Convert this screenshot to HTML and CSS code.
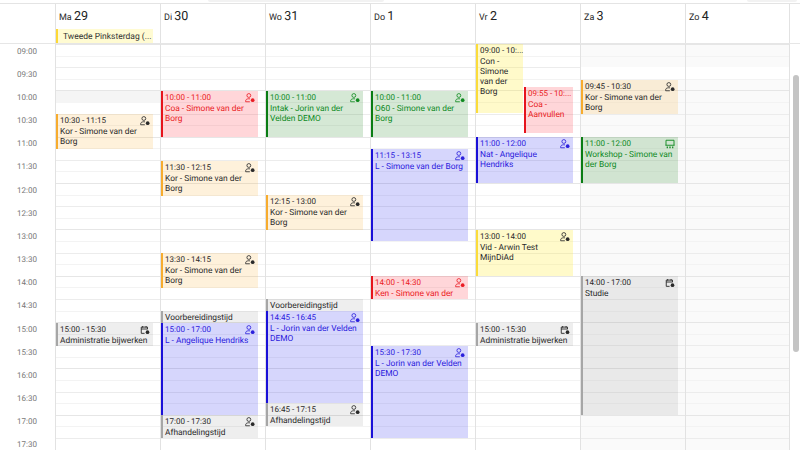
FILE: index.html
```html
<!DOCTYPE html>
<html>

<head>
    <meta charset="UTF-8">
    <link rel="stylesheet" href="styles.css">
</head>

<body>
    <svg class="icon-defs" width="0" height="0">
        <symbol id="person" viewBox="0 0 12 12">
            <circle cx="4.6" cy="3" r="2.3" fill="none" stroke="currentColor" stroke-width="1" />
            <path d="M.8 10.5V9.2c0-1.5 2-2.3 3.8-2.3.5 0 1 .1 1.5.2M.8 10.5h5" fill="none" stroke="currentColor" stroke-width="1" />
            <circle cx="9.2" cy="8.6" r="2.2" fill="currentColor" />
        </symbol>
        <symbol id="agenda" viewBox="0 0 12 12">
            <path d="M5.5 10H1.5V2.5h7.5V5M1.5 4.8h7.5M3.2 1.2v2M7.3 1.2v2" fill="none" stroke="currentColor" stroke-width="1.1" />
            <circle cx="9" cy="8.6" r="2.2" fill="currentColor" />
        </symbol>
        <symbol id="room" viewBox="0 0 12 12">
            <path d="M1.2 7.5V1.5h9.6v6" fill="none" stroke="currentColor" stroke-width="1.1" />
            <path d="M.5 7.5h11" fill="none" stroke="currentColor" stroke-width="1.1" />
            <path d="M2 9h1.5v2H2zM5.2 9h1.6v2H5.2zM8.5 9H10v2H8.5z" fill="currentColor" />
        </symbol>
    </svg>

    <div class="topbar">
        <span class="tab tab-left"></span>
        <span class="tab tab-right"></span>
    </div>

    <header class="week-head">
        <div class="corner"></div>
        <div class="day-head">
            <div class="day-title">Ma <strong>29</strong></div>
            <div class="all-day">Tweede Pinksterdag (...</div>
        </div>
        <div class="day-head">
            <div class="day-title">Di <strong>30</strong></div>
        </div>
        <div class="day-head">
            <div class="day-title">Wo <strong>31</strong></div>
        </div>
        <div class="day-head">
            <div class="day-title">Do <strong>1</strong></div>
        </div>
        <div class="day-head">
            <div class="day-title">Vr <strong>2</strong></div>
        </div>
        <div class="day-head">
            <div class="day-title">Za <strong>3</strong></div>
        </div>
        <div class="day-head">
            <div class="day-title">Zo <strong>4</strong></div>
        </div>
    </header>

    <div class="week-body">
        <div class="times">
            <div class="time">09:00</div>
            <div class="time">09:30</div>
            <div class="time">10:00</div>
            <div class="time">10:30</div>
            <div class="time">11:00</div>
            <div class="time">11:30</div>
            <div class="time">12:00</div>
            <div class="time">12:30</div>
            <div class="time">13:00</div>
            <div class="time">13:30</div>
            <div class="time">14:00</div>
            <div class="time">14:30</div>
            <div class="time">15:00</div>
            <div class="time">15:30</div>
            <div class="time">16:00</div>
            <div class="time">16:30</div>
            <div class="time">17:00</div>
            <div class="time">17:30</div>
        </div>

        <!-- maandag -->
        <div class="day">
            <div class="blocked" style="top: 47px; height: 12px"></div>
            <div class="event orange" style="top: 70px; height: 35px">
                <div class="event-time"><span>10:30 - 11:15</span><svg class="icon"><use href="#person" /></svg></div>
                <div>Kor - Simone van der Borg</div>
            </div>
            <div class="event grey" style="top: 279px; height: 23px">
                <div class="event-time"><span>15:00 - 15:30</span><svg class="icon"><use href="#agenda" /></svg></div>
                <div>Administratie bijwerken</div>
            </div>
        </div>

        <!-- dinsdag -->
        <div class="day">
            <div class="event red" style="top: 47px; height: 46px">
                <div class="event-time"><span>10:00 - 11:00</span><svg class="icon"><use href="#person" /></svg></div>
                <div>Coa - Simone van der Borg</div>
            </div>
            <div class="event orange" style="top: 117px; height: 35px">
                <div class="event-time"><span>11:30 - 12:15</span><svg class="icon"><use href="#person" /></svg></div>
                <div>Kor - Simone van der Borg</div>
            </div>
            <div class="event orange" style="top: 209px; height: 35px">
                <div class="event-time"><span>13:30 - 14:15</span><svg class="icon"><use href="#person" /></svg></div>
                <div>Kor - Simone van der Borg</div>
            </div>
            <div class="event grey" style="top: 267px; height: 12px">
                <div>Voorbereidingstijd</div>
            </div>
            <div class="event blue" style="top: 279px; height: 92px">
                <div class="event-time"><span>15:00 - 17:00</span><svg class="icon"><use href="#person" /></svg></div>
                <div>L - Angelique Hendriks</div>
            </div>
            <div class="event grey" style="top: 371px; height: 23px">
                <div class="event-time"><span>17:00 - 17:30</span><svg class="icon"><use href="#person" /></svg></div>
                <div>Afhandelingstijd</div>
            </div>
        </div>

        <!-- woensdag -->
        <div class="day">
            <div class="event green" style="top: 47px; height: 46px">
                <div class="event-time"><span>10:00 - 11:00</span><svg class="icon"><use href="#person" /></svg></div>
                <div>Intak - Jorin van der Velden DEMO</div>
            </div>
            <div class="event orange" style="top: 151px; height: 35px">
                <div class="event-time"><span>12:15 - 13:00</span><svg class="icon"><use href="#person" /></svg></div>
                <div>Kor - Simone van der Borg</div>
            </div>
            <div class="event grey" style="top: 255px; height: 12px">
                <div>Voorbereidingstijd</div>
            </div>
            <div class="event blue" style="top: 267px; height: 92px">
                <div class="event-time"><span>14:45 - 16:45</span><svg class="icon"><use href="#person" /></svg></div>
                <div>L - Jorin van der Velden DEMO</div>
            </div>
            <div class="event grey" style="top: 359px; height: 23px">
                <div class="event-time"><span>16:45 - 17:15</span><svg class="icon"><use href="#person" /></svg></div>
                <div>Afhandelingstijd</div>
            </div>
        </div>

        <!-- donderdag -->
        <div class="day">
            <div class="event green" style="top: 47px; height: 46px">
                <div class="event-time"><span>10:00 - 11:00</span><svg class="icon"><use href="#person" /></svg></div>
                <div>O60 - Simone van der Borg</div>
            </div>
            <div class="event blue" style="top: 105px; height: 92px">
                <div class="event-time"><span>11:15 - 13:15</span><svg class="icon"><use href="#person" /></svg></div>
                <div>L - Simone van der Borg</div>
            </div>
            <div class="event red" style="top: 232px; height: 23px">
                <div class="event-time"><span>14:00 - 14:30</span><svg class="icon"><use href="#person" /></svg></div>
                <div>Ken - Simone van der</div>
            </div>
            <div class="event blue" style="top: 302px; height: 92px">
                <div class="event-time"><span>15:30 - 17:30</span><svg class="icon"><use href="#person" /></svg></div>
                <div>L - Jorin van der Velden DEMO</div>
            </div>
        </div>

        <!-- vrijdag -->
        <div class="day">
            <div class="event yellow narrow" style="top: 0; height: 69px">
                <div class="event-time"><span>09:00 - 10:...</span></div>
                <div>Con - Simone van der Borg</div>
            </div>
            <div class="event red narrow shifted" style="top: 43px; height: 46px">
                <div class="event-time"><span>09:55 - 10:...</span></div>
                <div>Coa - Aanvullen</div>
            </div>
            <div class="event blue" style="top: 93px; height: 46px">
                <div class="event-time"><span>11:00 - 12:00</span><svg class="icon"><use href="#person" /></svg></div>
                <div>Nat - Angelique Hendriks</div>
            </div>
            <div class="event yellow" style="top: 186px; height: 46px">
                <div class="event-time"><span>13:00 - 14:00</span><svg class="icon"><use href="#person" /></svg></div>
                <div>Vid - Arwin Test MijnDiAd</div>
            </div>
            <div class="event grey" style="top: 279px; height: 23px">
                <div class="event-time"><span>15:00 - 15:30</span><svg class="icon"><use href="#agenda" /></svg></div>
                <div>Administratie bijwerken</div>
            </div>
        </div>

        <!-- zaterdag -->
        <div class="day weekend">
            <div class="free" style="top: 23px; height: 12px"></div>
            <div class="event orange" style="top: 36px; height: 34px">
                <div class="event-time"><span>09:45 - 10:30</span><svg class="icon"><use href="#person" /></svg></div>
                <div>Kor - Simone van der Borg</div>
            </div>
            <div class="event green" style="top: 93px; height: 46px">
                <div class="event-time"><span>11:00 - 12:00</span><svg class="icon"><use href="#room" /></svg></div>
                <div>Workshop - Simone van der Borg</div>
            </div>
            <div class="event grey" style="top: 232px; height: 139px">
                <div class="event-time"><span>14:00 - 17:00</span><svg class="icon"><use href="#agenda" /></svg></div>
                <div>Studie</div>
            </div>
        </div>

        <!-- zondag -->
        <div class="day weekend">
            <div class="free" style="top: 23px; height: 12px"></div>
        </div>
    </div>

    <div class="scroll-thumb"></div>
</body>

</html>
```

FILE: styles.css
```css
html,
body {
    margin: 0;
    height: 100%;
    overflow: hidden;
}

body {
    font-family: Roboto, "Liberation Sans", sans-serif;
    color: #2a2a2a;
    background: white;
    position: relative;
    text-rendering: geometricPrecision;
}

.icon-defs {
    display: block;
    height: 0;
}

.topbar {
    height: 3px;
    display: flex;
    border-bottom: 1px solid #e4e4e4;
}

.tab {
    background: #f2f2f2;
    height: 2px;
    border-radius: 0 0 3px 3px;
}

.tab-left {
    width: 176px;
    margin-left: 208px;
}

.tab-right {
    width: 50px;
    margin-left: auto;
    margin-right: 3px;
}

.week-head {
    display: flex;
    height: 39px;
    border-bottom: 1px solid #e6e6e6;
}

.corner {
    width: 55px;
    flex: none;
}

.day-head {
    width: 105px;
    flex: none;
    box-sizing: border-box;
    border-left: 1px solid #e2e2e2;
    display: flex;
    flex-direction: column;
    padding-top: 5px;
}

.day-head:last-child {
    border-right: 1px solid #e2e2e2;
}

.day-title {
    font-size: 9px;
    line-height: 16px;
    padding-left: 3px;
}

.day-title strong {
    font-weight: normal;
    font-size: 12.5px;
    color: #222222;
}

.all-day {
    margin: 3px 7px 0 0;
    height: 13px;
    padding: 1px 0 0 5px;
    line-height: 14px;
    font-size: 8.5px;
    border-left: 2px solid #fdd835;
    background: #fffbd2;
    white-space: nowrap;
    overflow: hidden;
    color: #333333;
}

.week-body {
    display: flex;
    height: 406px;
}

.times {
    width: 55px;
    flex: none;
}

.time {
    height: 23.175px;
    box-sizing: border-box;
    padding: 1.5px 18px 0 0;
    text-align: right;
    font-size: 8px;
    line-height: 11px;
    color: #777777;
}

.day {
    width: 105px;
    flex: none;
    box-sizing: border-box;
    border-left: 1px solid #e2e2e2;
    position: relative;
    overflow: hidden;
    background-image: repeating-linear-gradient(to bottom,
            #e6e6e6 0, #e6e6e6 1px,
            transparent 1px, transparent 11.59px,
            #f3f3f3 11.59px, #f3f3f3 12.59px,
            transparent 12.59px, transparent 23.175px,
            #ececec 23.175px, #ececec 24.175px,
            transparent 24.175px, transparent 34.76px,
            #f3f3f3 34.76px, #f3f3f3 35.76px,
            transparent 35.76px, transparent 46.35px);
}

.day:last-child {
    border-right: 1px solid #e2e2e2;
}

.weekend {
    background-color: #fafafa;
}

.blocked {
    position: absolute;
    left: 0;
    right: 0;
    background: #f5f5f5;
}

.free {
    position: absolute;
    left: 0;
    right: 0;
    background: white;
}

.event {
    position: absolute;
    left: 0;
    width: 97px;
    box-sizing: border-box;
    border-left: 2px solid;
    padding: 1.5px 4px 0 2px;
    font-size: 8.4px;
    line-height: 10px;
    overflow: hidden;
}

.event-time {
    display: flex;
    justify-content: space-between;
    align-items: center;
    height: 10px;
    font-size: 8px;
    margin-bottom: 1px;
}

.event-time span {
    white-space: nowrap;
}

.icon {
    width: 10px;
    height: 10px;
    flex: none;
    margin-right: -1px;
}

.narrow {
    width: 47px;
    padding-right: 2px;
}

.shifted {
    left: 48px;
    width: 49px;
}

.red {
    color: #ea1c24;
    border-color: #e6141c;
    background: rgba(255, 10, 30, 0.17);
}

.green {
    color: #0f8a1f;
    border-color: #0a7d14;
    background: rgba(20, 125, 20, 0.18);
}

.blue {
    color: #2b20dc;
    border-color: #1a10d8;
    background: rgba(30, 30, 240, 0.18);
}

.orange {
    border-color: #f7ac2e;
    background: rgba(250, 165, 30, 0.16);
}

.yellow {
    border-color: #fbdc3a;
    background: rgba(255, 235, 60, 0.27);
}

.grey {
    border-color: #a6a6a6;
    background: rgba(0, 0, 0, 0.065);
}

.scroll-thumb {
    position: absolute;
    top: 75px;
    left: 793px;
    width: 6px;
    height: 277px;
    background: #c4c4c4;
    border-radius: 3px;
}
```
